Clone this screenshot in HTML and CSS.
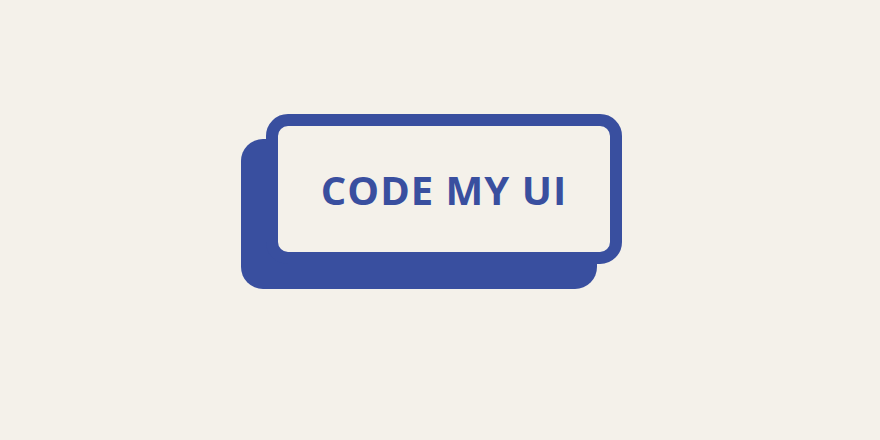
FILE: index.html
```html
<!DOCTYPE html>
<html>
<head>
<meta charset="utf-8">
<link rel="stylesheet" href="styles.css">
</head>
<body>
<div class="stage">
  <button class="btn">CODE MY UI</button>
</div>
</body>
</html>
```

FILE: styles.css
```css
html, body {
  margin: 0;
  padding: 0;
  background: #f4f1ea;
}
.stage {
  width: 880px;
  height: 440px;
  display: flex;
  align-items: center;
  justify-content: center;
}
.btn {
  box-sizing: border-box;
  width: 356px;
  height: 150px;
  margin: 0 0 62px 8px;
  border: 12px solid #394f9f;
  border-radius: 22px;
  background: #f4f1ea;
  box-shadow: inset 0 0 0 0 transparent, -25px 25px 0 0 #394f9f;
  color: #394f9f;
  font-family: "Open Sans", "Liberation Sans", sans-serif;
  font-weight: 700;
  font-size: 40px;
  letter-spacing: 1px;
  padding: 0;
  cursor: pointer;
}
```
